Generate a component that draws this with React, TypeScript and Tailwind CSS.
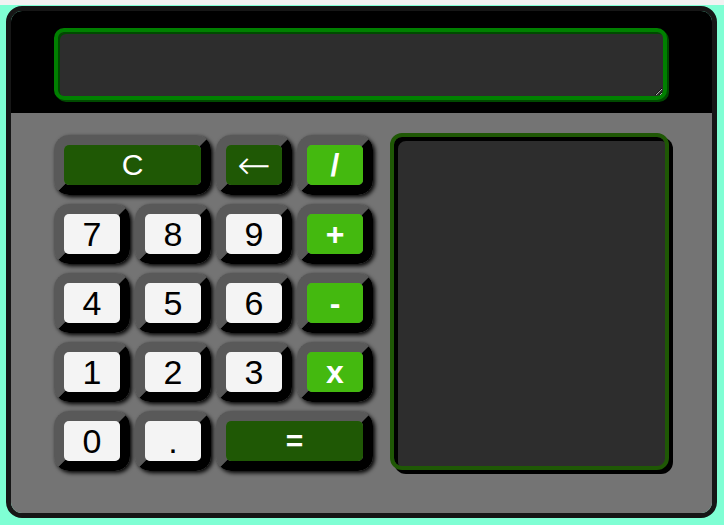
import React, { useState } from 'react'

type Key = { label: string; kind: 'num' | 'op' | 'fn'; wide?: boolean }

const keys: Key[] = [
  { label: 'C', kind: 'fn', wide: true },
  { label: '←', kind: 'fn' },
  { label: '/', kind: 'op' },
  { label: '7', kind: 'num' },
  { label: '8', kind: 'num' },
  { label: '9', kind: 'num' },
  { label: '+', kind: 'op' },
  { label: '4', kind: 'num' },
  { label: '5', kind: 'num' },
  { label: '6', kind: 'num' },
  { label: '-', kind: 'op' },
  { label: '1', kind: 'num' },
  { label: '2', kind: 'num' },
  { label: '3', kind: 'num' },
  { label: 'x', kind: 'op' },
  { label: '0', kind: 'num' },
  { label: '.', kind: 'num' },
  { label: '=', kind: 'fn', wide: true },
]

const faceStyles = {
  num: 'bg-[#f4f4f4] text-black text-[34px]',
  op: 'bg-[#44b90f] text-white text-[32px] font-bold',
  fn: 'bg-[#1f5805] text-white text-[30px]',
}

const App = () => {
  const [display, setDisplay] = useState('')

  return (
    <div className='w-full h-[525px] bg-[#f2f2f2] pt-[5px] font-["Liberation_Sans",Arial,sans-serif]'>
      <div className='h-[520px] bg-[#7fffd4] pl-[6px] pt-[1px]'>
        <div className='w-[711px] h-[512px] border-[5px] border-[#161616] rounded-[16px] overflow-hidden flex flex-col'>
          <div className='h-[102px] bg-black pl-[43px] pt-[17px] shrink-0'>
            <textarea
              value={display}
              onChange={(e) => setDisplay(e.target.value)}
              className='w-[613px] h-[72px] bg-[#2d2d2d] border-4 border-[#008000] rounded-[10px] shadow-[2px_2px_0_#004a00,inset_2px_2px_0_#004a00] text-white text-2xl outline-none px-2'
            />
          </div>

          <div className='flex-1 bg-[#747474] flex items-start pl-[43px] pt-[20px] gap-[17px]'>
            <div className='grid grid-cols-[repeat(4,76px)] gap-x-[5px] gap-y-[9px] mt-[2px]'>
              {keys.map((k, i) => (
                <button
                  key={i}
                  className={`h-[60px] border-[10px] border-t-[#595959] border-l-[#595959] border-r-black border-b-black rounded-[15px] shadow-[2px_2px_4px_#000] p-0 ${k.wide ? 'col-span-2' : ''}`}
                  onClick={() => setDisplay((d) => d + k.label)}
                >
                  <div className={`w-full h-full rounded-[5px] flex items-center justify-center leading-none ${faceStyles[k.kind]} ${k.label === '=' ? 'font-bold' : ''}`}>
                    {k.label === '←' ? (
                      <span className='font-["DejaVu_Sans",sans-serif] text-[40px] font-light'>←</span>
                    ) : (
                      k.label
                    )}
                  </div>
                </button>
              ))}
            </div>

            <div className='w-[279px] h-[337px] bg-[#2d2d2d] border-4 border-[#1f5805] rounded-[12px] shadow-[4px_4px_0_#000,inset_4px_4px_0_#000]'></div>
          </div>
        </div>
      </div>
    </div>
  )
}

export default App
